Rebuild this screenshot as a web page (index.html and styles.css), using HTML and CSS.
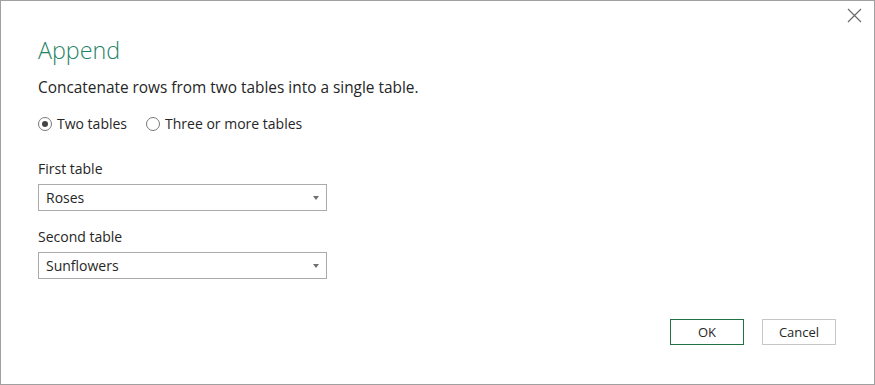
FILE: index.html
```html
<!DOCTYPE html>
<html lang="en">
<head>
    <meta charset="UTF-8">
    <title>Append</title>
    <link rel="stylesheet" href="styles.css">
</head>
<body>
    <div class="dialog">
        <div class="topbar">
            <span class="close">
                <svg width="15" height="15" viewBox="0 0 15 15"><path d="M1 1 L14 14 M14 1 L1 14" stroke="#6a6a6a" stroke-width="1.2" fill="none"/></svg>
            </span>
        </div>
        <div class="content">
            <p class="title">Append</p>
            <p class="message">Concatenate rows from two tables into a single table.</p>

            <div class="radios">
                <label class="radio"><span class="dot checked"></span>Two tables</label>
                <label class="radio"><span class="dot"></span>Three or more tables</label>
            </div>

            <div class="field first">
                <span class="label">First table</span>
                <div class="select">Roses<span class="arrow"></span></div>
            </div>

            <div class="field">
                <span class="label">Second table</span>
                <div class="select">Sunflowers<span class="arrow"></span></div>
            </div>
        </div>
        <div class="buttons">
            <button class="btn ok">OK</button>
            <button class="btn">Cancel</button>
        </div>
    </div>
</body>
</html>
```

FILE: styles.css
```css
body, html {
    margin: 0;
    padding: 0;
    background: #fff;
    font-family: "Open Sans", "Noto Sans", sans-serif;
    color: #262626;
}

/* the window frame */
.dialog {
    width: 873px;
    height: 383px;
    border: 1px solid #a0a0a0;
    position: relative;
    display: flex;
    flex-direction: column;
}

.topbar {
    display: flex;
    justify-content: flex-end;
    padding: 7px 12px 0 0;
    height: 22px;
}

.close {
    display: flex;
}

.content {
    padding: 0 0 0 37px;
    flex: 1;
}

.title {
    margin: 5px 0 0 0;
    font-size: 23.3px;
    font-weight: 300;
    color: #1f8466;
    line-height: 30px;
}

.message {
    margin: 13px 0 0 0;
    font-size: 15.4px;
    line-height: 20px;
}

.radios {
    display: flex;
    gap: 19px;
    margin-top: 16px;
    font-size: 14px;
    line-height: 20px;
}

.radio {
    display: flex;
    align-items: center;
    gap: 5px;
}

.dot {
    width: 12px;
    height: 12px;
    border: 1px solid #7a7a7a;
    border-radius: 50%;
    position: relative;
    box-sizing: content-box;
}

.dot.checked::after {
    content: "";
    position: absolute;
    left: 3px;
    top: 3px;
    width: 6px;
    height: 6px;
    border-radius: 50%;
    background: #444;
}

.field {
    margin-top: 16px;
    display: flex;
    flex-direction: column;
}

.field.first {
    margin-top: 25px;
}

.label {
    font-size: 14px;
    line-height: 20px;
}

.select {
    margin-top: 5px;
    width: 280px;
    height: 25px;
    border: 1px solid #ababab;
    padding: 0 0 0 7px;
    font-size: 14px;
    line-height: 25px;
    display: flex;
    justify-content: space-between;
    align-items: center;
}

.arrow {
    width: 0;
    height: 0;
    border-left: 3.5px solid transparent;
    border-right: 3.5px solid transparent;
    border-top: 4px solid #707070;
    margin-right: 7px;
}

.buttons {
    display: flex;
    justify-content: flex-end;
    gap: 18px;
    padding: 0 38px 39px 0;
}

.btn {
    width: 74px;
    height: 26px;
    background: #fff;
    border: 1px solid #c6c6c6;
    font-family: "Open Sans", "Noto Sans", sans-serif;
    font-size: 13px;
    color: #262626;
    padding: 0;
}

.btn.ok {
    border-color: #217346;
}
```
